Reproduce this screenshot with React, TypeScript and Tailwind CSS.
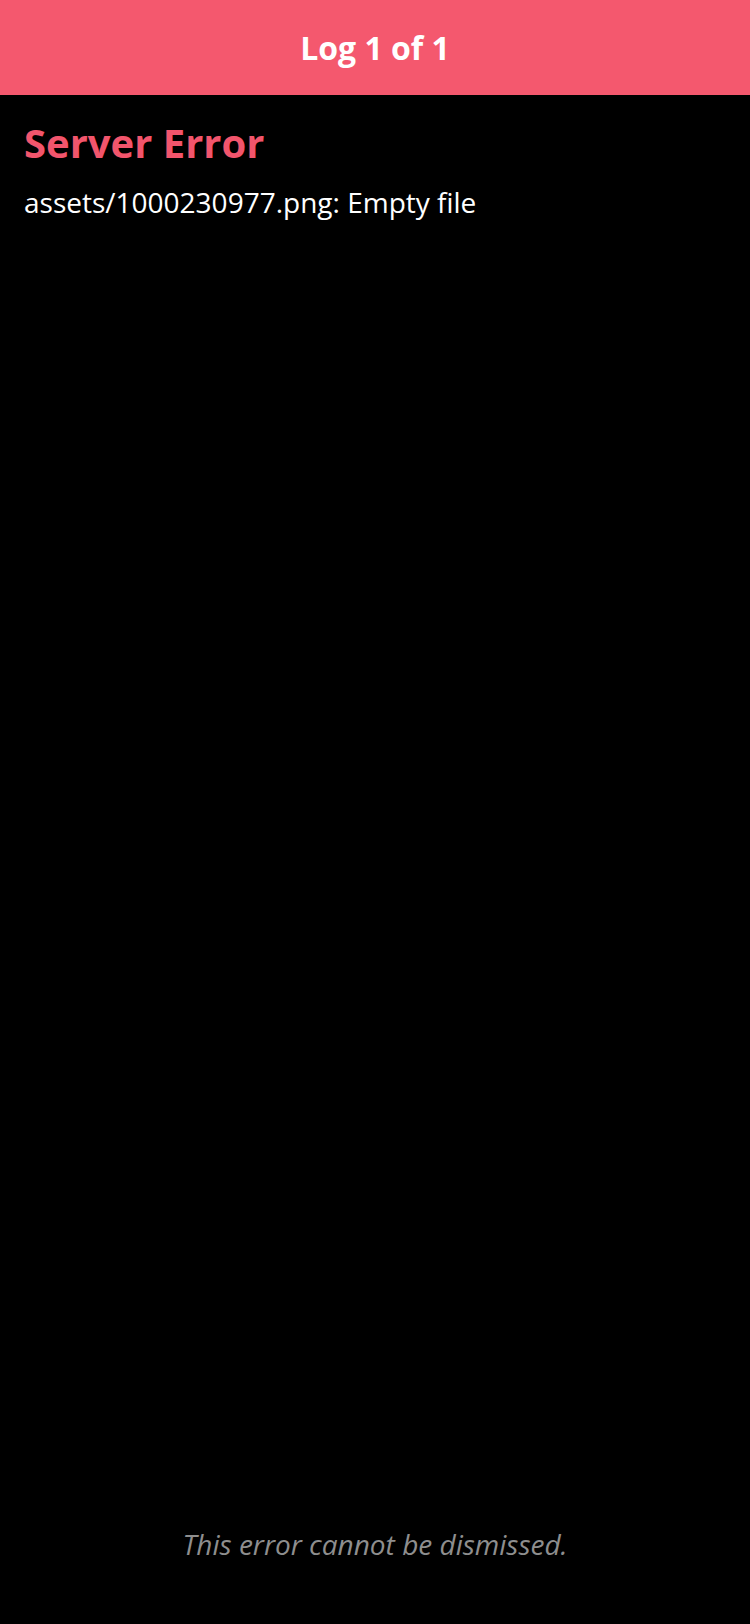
export default function App() {
  return (
    <div
      className="flex min-h-screen flex-col bg-black"
      style={{ fontFamily: '"Open Sans", "Liberation Sans", sans-serif' }}
    >
      {/* Header */}
      <div className="flex h-[95px] items-center justify-center bg-[#f4586e]">
        <h1 className="text-[32px] font-bold text-white">Log 1 of 1</h1>
      </div>

      {/* Error body */}
      <div className="px-6 pt-[23px]">
        <h2 className="text-[40px] leading-[50px] font-bold text-[#f2556c]">
          Server Error
        </h2>
        <p className="mt-[15px] text-[28px] leading-[38px] text-white">
          assets/1000230977.png: Empty file
        </p>
      </div>

      {/* Footer */}
      <div className="mt-auto flex justify-center pb-[62px]">
        <p className="text-[28px] leading-[36px] italic text-[#8e8e8e]">
          This error cannot be dismissed.
        </p>
      </div>
    </div>
  );
}
